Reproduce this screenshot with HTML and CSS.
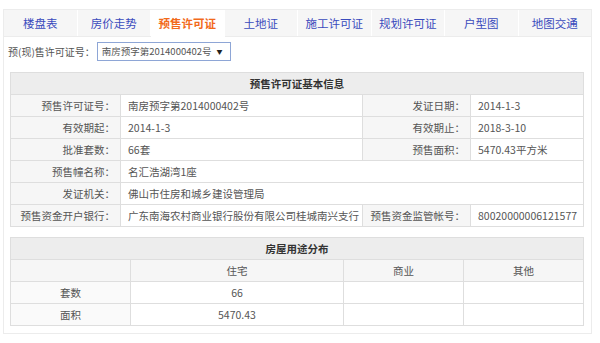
FILE: index.html
```html
<!DOCTYPE html>
<html lang="zh-CN">
<head>
    <meta charset="UTF-8">
    <meta name="viewport" content="width=device-width, initial-scale=1.0">
    <title>预售许可证</title>
    <link rel="stylesheet" href="styles.css">
</head>
<body>
    <div class="box">
        <ul class="tabs">
            <li>楼盘表</li>
            <li>房价走势</li>
            <li class="active">预售许可证</li>
            <li>土地证</li>
            <li>施工许可证</li>
            <li>规划许可证</li>
            <li>户型图</li>
            <li>地图交通</li>
        </ul>

        <div class="picker">
            <span class="picker-label">预(现)售许可证号：</span>
            <span class="picker-select">南房预字第2014000402号 <i>▼</i></span>
        </div>

        <table class="info">
            <colgroup>
                <col class="c1"><col class="c2"><col class="c3"><col class="c4">
            </colgroup>
            <tr><th colspan="4">预售许可证基本信息</th></tr>
            <tr>
                <td class="lbl">预售许可证号：</td><td>南房预字第2014000402号</td>
                <td class="lbl">发证日期：</td><td>2014-1-3</td>
            </tr>
            <tr>
                <td class="lbl">有效期起：</td><td>2014-1-3</td>
                <td class="lbl">有效期止：</td><td>2018-3-10</td>
            </tr>
            <tr>
                <td class="lbl">批准套数：</td><td>66套</td>
                <td class="lbl">预售面积：</td><td>5470.43平方米</td>
            </tr>
            <tr>
                <td class="lbl">预售幢名称：</td><td colspan="3">名汇浩湖湾1座</td>
            </tr>
            <tr>
                <td class="lbl">发证机关：</td><td colspan="3">佛山市住房和城乡建设管理局</td>
            </tr>
            <tr>
                <td class="lbl">预售资金开户银行：</td><td>广东南海农村商业银行股份有限公司桂城南兴支行</td>
                <td class="lbl">预售资金监管帐号：</td><td>80020000006121577</td>
            </tr>
        </table>

        <table class="usage">
            <colgroup>
                <col class="u1"><col class="u2"><col class="u3"><col class="u4">
            </colgroup>
            <tr><th colspan="4">房屋用途分布</th></tr>
            <tr class="head">
                <td></td><td>住宅</td><td>商业</td><td>其他</td>
            </tr>
            <tr>
                <td class="name">套数</td><td>66</td><td></td><td></td>
            </tr>
            <tr>
                <td class="name">面积</td><td>5470.43</td><td></td><td></td>
            </tr>
        </table>
    </div>
</body>
</html>
```

FILE: styles.css
```css
body {
    margin: 0;
    padding: 9px 8px 0 3px;
    font-family: "Noto Sans CJK SC", "Noto Sans", sans-serif;
    font-size: 10.5px;
    color: #555;
    background: #fff;
}

.box {
    width: 587px;
    height: 323px;
    border: 1px solid #ececec;
}

.tabs {
    display: flex;
    margin: 0;
    padding: 0;
    list-style: none;
    height: 26px;
    background: #f6f6f6;
    border-bottom: 1px solid #ececec;
}

.tabs li {
    flex: 1;
    text-align: center;
    line-height: 26px;
    font-size: 11.5px;
    color: #3a4bbd;
    border-right: 1px solid #fff;
}

.tabs li:last-child {
    border-right: none;
}

.tabs li.active {
    background: #fff;
    color: #f26a1b;
    font-weight: bold;
    height: 27px;
}

.picker {
    display: flex;
    align-items: center;
    padding: 4px 0 0 4px;
    height: 20px;
    white-space: nowrap;
}

.picker-label {
    font-size: 10px;
}

.picker-select {
    display: inline-flex;
    align-items: center;
    gap: 5px;
    box-sizing: border-box;
    width: 134px;
    height: 19px;
    padding: 0 4px;
    margin-left: 2px;
    border: 1px solid #8ea6d6;
    color: #555;
    font-size: 9.5px;
}

.picker-select i {
    font-style: normal;
    font-size: 6px;
    color: #222;
}

table {
    border-collapse: collapse;
    table-layout: fixed;
    width: 573px;
    margin-left: 6px;
}

table.info {
    margin-top: 11px;
}

table.usage {
    margin-top: 10px;
}

th, td {
    border: 1px solid #dedede;
    height: 21px;
    padding: 0 7px;
    white-space: nowrap;
}

th {
    background: #ededed;
    color: #333;
    font-weight: bold;
    text-align: center;
}

.c1 { width: 110px; }
.c2 { width: 242px; }
.c3 { width: 108px; }
.c4 { width: 113px; }

.info td.lbl {
    background: #f6f6f6;
    text-align: right;
    padding-right: 5px;
}

.u1 { width: 120px; }
.u2 { width: 213px; }
.u3 { width: 120px; }
.u4 { width: 120px; }

.usage td {
    text-align: center;
}

.usage tr.head td {
    background: #f6f6f6;
}

.usage td.name {
    background: #fafafa;
}
```
